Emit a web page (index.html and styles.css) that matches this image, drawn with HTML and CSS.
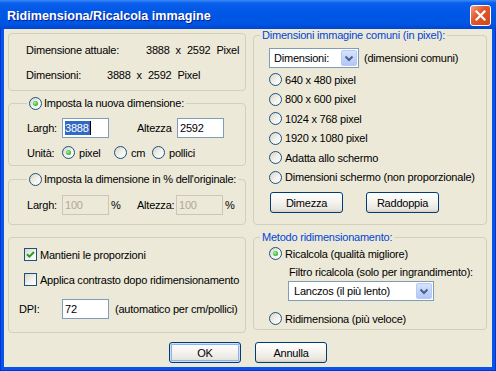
FILE: index.html
```html
<!DOCTYPE html>
<html lang="it">

<head>
    <meta charset="UTF-8">
    <meta name="viewport" content="width=device-width, initial-scale=1.0">
    <title>Ridimensiona/Ricalcola immagine</title>
    <link rel="stylesheet" href="styles.css">
</head>

<body>
    <div class="window">
        <div class="titleBar">
            <span class="title">Ridimensiona/Ricalcola immagine</span>
            <span class="closeBtn">
                <svg width="11" height="11" viewBox="0 0 11 11"><path d="M1.5 1.5 L9.5 9.5 M9.5 1.5 L1.5 9.5" stroke="#fff" stroke-width="2.2" stroke-linecap="square" fill="none"/></svg>
            </span>
        </div>
        <div class="client">
            <div class="columns">
                <div class="column leftColumn">
                    <fieldset class="group infoGroup">
                        <div class="groupBody">
                            <div class="infoRow">
                                <span class="infoLabel">Dimensione attuale:</span>
                                <span class="dims"><span>3888</span><span>x</span><span>2592</span><span>Pixel</span></span>
                            </div>
                            <div class="infoRow">
                                <span class="infoLabel shortLabel">Dimensioni:</span>
                                <span class="dims"><span>3888</span><span>x</span><span>2592</span><span>Pixel</span></span>
                            </div>
                        </div>
                    </fieldset>
                    <fieldset class="group newSizeGroup">
                        <legend><span class="legendInner"><span class="radio checked"></span>Imposta la nuova dimensione:</span></legend>
                        <div class="groupBody">
                            <div class="fieldRow">
                                <span class="fieldLabel">Largh:</span>
                                <span class="textBox"><span class="selText">3888</span><span class="caret"></span></span>
                                <span class="fieldLabel secondLabel">Altezza</span>
                                <span class="textBox">2592</span>
                            </div>
                            <div class="unitRow">
                                <span class="fieldLabel">Unità:</span>
                                <span class="option unitPixel"><span class="radio checked"></span>pixel</span>
                                <span class="option unitCm"><span class="radio"></span>cm</span>
                                <span class="option"><span class="radio"></span>pollici</span>
                            </div>
                        </div>
                    </fieldset>
                    <fieldset class="group percentGroup">
                        <legend><span class="legendInner"><span class="radio"></span>Imposta la dimensione in % dell'originale:</span></legend>
                        <div class="groupBody">
                            <div class="fieldRow">
                                <span class="fieldLabel">Largh:</span>
                                <span class="textBox disabled">100</span>
                                <span class="percent">%</span>
                                <span class="fieldLabel percentLabel">Altezza:</span>
                                <span class="textBox disabled">100</span>
                                <span class="percent">%</span>
                            </div>
                        </div>
                    </fieldset>
                    <fieldset class="group optionsGroup">
                        <div class="groupBody">
                            <div class="option checkRow"><span class="checkBox"><svg width="9" height="9" viewBox="0 0 9 9"><path d="M1 4.2 L3.4 6.6 L8 2" stroke="#21A121" stroke-width="2" fill="none"/></svg></span>Mantieni le proporzioni</div>
                            <div class="option checkRow secondCheck"><span class="checkBox"></span>Applica contrasto dopo ridimensionamento</div>
                            <div class="fieldRow dpiRow">
                                <span class="dpiLabel">DPI:</span>
                                <span class="textBox">72</span>
                                <span class="dpiNote">(automatico per cm/pollici)</span>
                            </div>
                        </div>
                    </fieldset>
                </div>
                <div class="column rightColumn">
                    <fieldset class="group blueGroup commonGroup">
                        <legend><span class="legendInner">Dimensioni immagine comuni (in pixel):</span></legend>
                        <div class="groupBody">
                            <div class="selectRow">
                                <span class="select sizeSelect">Dimensioni:<span class="dropBtn"><svg width="16" height="16" viewBox="0 0 16 16"><path d="M4.5 6.5 L8 10 L11.5 6.5" stroke="#4D6185" stroke-width="2" fill="none"/></svg></span></span>
                                <span class="selectNote">(dimensioni comuni)</span>
                            </div>
                            <div class="radioList">
                                <span class="option"><span class="radio"></span>640 x 480 pixel</span>
                                <span class="option"><span class="radio"></span>800 x 600 pixel</span>
                                <span class="option"><span class="radio"></span>1024 x 768 pixel</span>
                                <span class="option"><span class="radio"></span>1920 x 1080 pixel</span>
                                <span class="option"><span class="radio"></span>Adatta allo schermo</span>
                                <span class="option"><span class="radio"></span>Dimensioni schermo (non proporzionale)</span>
                            </div>
                            <div class="buttonRow">
                                <button class="btn wideBtn">Dimezza</button>
                                <button class="btn wideBtn">Raddoppia</button>
                            </div>
                        </div>
                    </fieldset>
                    <fieldset class="group blueGroup methodGroup">
                        <legend><span class="legendInner">Metodo ridimensionamento:</span></legend>
                        <div class="groupBody">
                            <span class="option"><span class="radio checked"></span>Ricalcola (qualità migliore)</span>
                            <span class="filterLabel">Filtro ricalcola (solo per ingrandimento):</span>
                            <span class="select filterSelect">Lanczos (il più lento)<span class="dropBtn"><svg width="16" height="16" viewBox="0 0 16 16"><path d="M4.5 6.5 L8 10 L11.5 6.5" stroke="#4D6185" stroke-width="2" fill="none"/></svg></span></span>
                            <span class="option fastOption"><span class="radio"></span>Ridimensiona (più veloce)</span>
                        </div>
                    </fieldset>
                </div>
            </div>
            <div class="actions">
                <button class="btn defaultBtn">OK</button>
                <button class="btn">Annulla</button>
            </div>
        </div>
    </div>
</body>

</html>
```

FILE: styles.css
```css
* {
    box-sizing: border-box;
}

body {
    margin: 0;
    font-family: "Liberation Sans", Arial, sans-serif;
    font-size: 11px;
    letter-spacing: -0.22px;
    color: #000;
}

.window {
    width: 496px;
    height: 371px;
    display: flex;
    flex-direction: column;
    background: #0755E6;
    box-shadow: inset 1px 0 #0831D9, inset -1px 0 #0831D9, inset 0 -1px #0831D9;
}

.titleBar {
    height: 29px;
    flex: none;
    display: flex;
    align-items: center;
    justify-content: space-between;
    padding: 2px 5px 0 7px;
    background: linear-gradient(#3A8CF6 0px, #0A5EEB 3px, #0058E6 12px, #0055E3 24px, #0045CF 29px);
}

.title {
    color: #fff;
    font-weight: bold;
    font-size: 12.6px;
    letter-spacing: 0;
    text-shadow: 1px 1px 0 #0A1F8F;
}

.closeBtn {
    width: 21px;
    height: 21px;
    border: 1px solid #fff;
    border-radius: 3px;
    display: flex;
    align-items: center;
    justify-content: center;
    background: linear-gradient(135deg, #F1A086 0%, #E2592F 40%, #D04417 100%);
}

.client {
    flex: 1;
    margin: 0 4px 4px;
    background: #ECE9D8;
}

.columns {
    display: flex;
    align-items: flex-start;
    gap: 7px;
    padding-left: 4px;
    height: 304px;
}

.column {
    display: flex;
    flex-direction: column;
}

.leftColumn {
    width: 238px;
}

.rightColumn {
    width: 234px;
}

.group {
    margin: 0;
    padding: 0;
    min-width: 0;
    border: 1px solid #D0D0BF;
    border-radius: 4px;
}

.group legend {
    padding: 0 2px;
    margin-left: 18px;
    height: 13px;
    line-height: 13px;
}

.legendInner {
    display: flex;
    align-items: center;
    gap: 2px;
    white-space: nowrap;
}

.blueGroup legend {
    margin-left: 6px;
    color: #0046D5;
}

.groupBody {
    display: flex;
    flex-direction: column;
    align-items: flex-start;
}

/* left side */

.infoGroup {
    margin-top: 4px;
    height: 58px;
}

.infoGroup .groupBody {
    padding: 10px 0 0 17px;
    gap: 12px;
}

.infoRow {
    display: flex;
    line-height: 13px;
}

.infoLabel {
    width: 120px;
}

.shortLabel {
    width: 81px;
}

.dims {
    display: flex;
    gap: 6px;
}

.newSizeGroup {
    margin-top: 6px;
    height: 69px;
}

.newSizeGroup .groupBody,
.percentGroup .groupBody {
    padding: 8px 0 0 18px;
}

.percentGroup .groupBody {
    padding-top: 9px;
}

.fieldRow {
    display: flex;
    align-items: center;
    height: 20px;
}

.fieldLabel {
    width: 35px;
}

.secondLabel {
    margin-left: 28px;
    width: 40px;
}

.textBox {
    width: 47px;
    height: 20px;
    border: 1px solid #7F9DB9;
    background: #fff;
    padding: 0 2px;
    display: flex;
    align-items: center;
}

.selText {
    background: #316AC5;
    color: #fff;
    line-height: 14px;
    padding: 0 1px 0 0;
}

.caret {
    width: 1px;
    height: 14px;
    background: #000;
}

.textBox.disabled {
    background: #ECE9D8;
    border-color: #C9C7BA;
    color: #ACA899;
}

.percent {
    margin-left: 2px;
    width: 26px;
}

.percentLabel {
    width: 39px;
}

.unitRow {
    display: flex;
    align-items: center;
    height: 13px;
    margin-top: 8px;
}

.option {
    display: flex;
    align-items: center;
    gap: 3px;
    height: 13px;
    white-space: nowrap;
}

.unitRow .option {
    gap: 4px;
}

.unitPixel {
    width: 52px;
}

.unitCm {
    width: 38px;
}

.percentGroup {
    margin-top: 7px;
    height: 52px;
}

.optionsGroup {
    margin-top: 12px;
    height: 96px;
}

.optionsGroup .groupBody {
    padding: 10px 0 0 10px;
}

.checkRow {
    margin-left: 5px;
}

.secondCheck {
    margin-top: 12px;
}

.dpiRow {
    margin-top: 13px;
}

.dpiLabel {
    width: 43px;
}

.dpiNote {
    margin-left: 6px;
}

/* controls */

.radio {
    flex: none;
    position: relative;
    width: 13px;
    height: 13px;
    border-radius: 50%;
    border: 1px solid #1C5180;
    background: linear-gradient(135deg, #D7D4CA 0%, #F3F2EC 55%, #FFFFFF 100%);
}

.radio.checked::after {
    content: "";
    position: absolute;
    left: 3px;
    top: 3px;
    width: 5px;
    height: 5px;
    border-radius: 50%;
    background: radial-gradient(circle at 40% 40%, #B5F0B2 0%, #4DC94A 45%, #21A121 100%);
}

.checkBox {
    flex: none;
    width: 13px;
    height: 13px;
    border: 1px solid #1C5180;
    background: linear-gradient(135deg, #D7D4CA 0%, #F3F2EC 55%, #FFFFFF 100%);
    display: flex;
    align-items: center;
    justify-content: center;
}

.select {
    display: flex;
    align-items: center;
    justify-content: space-between;
    height: 20px;
    border: 1px solid #7F9DB9;
    background: #fff;
    padding: 0 1px 0 4px;
    white-space: nowrap;
}

.dropBtn {
    width: 16px;
    height: 16px;
    border-radius: 2px;
    border: 1px solid #B6CAF6;
    background: linear-gradient(#D6E3FD, #C0D2FA 60%, #B2C7F5);
    display: flex;
    align-items: center;
    justify-content: center;
}

.dropBtn svg {
    margin: -1px;
}

.btn {
    width: 72px;
    height: 21px;
    padding: 0;
    border: 1px solid #003C74;
    border-radius: 3px;
    background: linear-gradient(#FFFFFF 0%, #F5F4F0 45%, #E8E6DE 85%, #D6D0C5 100%);
    font-family: inherit;
    font-size: 11px;
    letter-spacing: -0.22px;
    color: #000;
}

.defaultBtn {
    box-shadow: inset 0 0 0 1px #CEDFF8, inset 0 0 0 2px #90B0EA;
}

/* right side */

.commonGroup {
    height: 196px;
}

.commonGroup .groupBody {
    padding: 6px 0 0 15px;
}

.selectRow {
    display: flex;
    align-items: center;
}

.sizeSelect {
    width: 90px;
}

.selectNote {
    margin-left: 5px;
}

.radioList {
    display: flex;
    flex-direction: column;
    gap: 6.5px;
    margin-top: 5px;
}

.buttonRow {
    display: flex;
    gap: 23px;
    margin: 8.5px 0 0 1px;
}

.wideBtn {
    width: 73px;
}

.methodGroup {
    margin-top: 6px;
    height: 99px;
}

.methodGroup .groupBody {
    padding: 3px 0 0 15px;
}

.filterLabel {
    margin: 6px 0 0 20px;
    line-height: 13px;
}

.filterSelect {
    width: 146px;
    margin: 2px 0 0 19px;
    padding-left: 5px;
}

.fastOption {
    margin-top: 11px;
}

.actions {
    display: flex;
    justify-content: center;
    gap: 14px;
    margin-top: 9px;
}
```
